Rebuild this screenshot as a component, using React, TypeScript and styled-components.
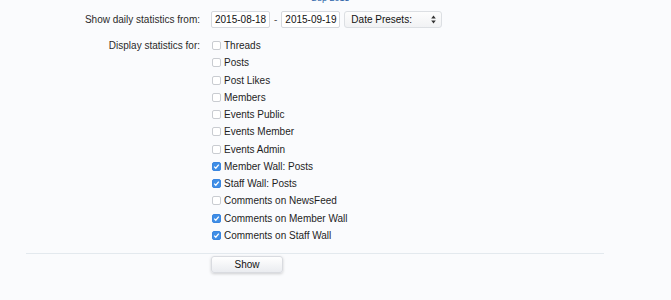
import React from 'react';
import styled, { createGlobalStyle } from 'styled-components';

const GlobalStyle = createGlobalStyle`
  html, body {
    margin: 0;
    padding: 0;
    background: #fafbfd;
  }
  body {
    font-family: 'Liberation Sans', Arial, sans-serif;
    font-size: 10px;
    color: #222;
  }
`;

const Page = styled.div`
  width: 671px;
  height: 300px;
  overflow: hidden;
  background: #fafbfd;
`;

const Caption = styled.div`
  margin-top: -6px;
  height: 9px;
  padding-left: 311px;
  font-size: 9px;
  line-height: 9px;
  color: #2b63a8;
`;

const Form = styled.form`
  margin: 0 0 0 26px;
  width: 578px;
`;

const Row = styled.div<{ $top: number }>`
  display: grid;
  grid-template-columns: 174px 1fr;
  column-gap: 11px;
  margin-top: ${({ $top }) => $top}px;
`;

const Label = styled.div<{ $height: number }>`
  text-align: right;
  line-height: ${({ $height }) => $height}px;
  white-space: nowrap;
  color: #2a2a2a;
`;

const Controls = styled.div`
  display: flex;
  align-items: center;
  gap: 4px;
`;

const DateInput = styled.input`
  box-sizing: border-box;
  width: 59px;
  height: 17px;
  padding: 0 0 0 3px;
  border: 1px solid #d6d9de;
  border-radius: 2px;
  background: #fff;
  font-family: 'Liberation Sans', Arial, sans-serif;
  font-size: 10px;
  color: #111;
  outline: none;
`;

const Dash = styled.span`
  color: #555;
`;

const Select = styled.div`
  box-sizing: border-box;
  position: relative;
  width: 98px;
  height: 17px;
  padding-left: 6px;
  border: 1px solid #dcdfe3;
  border-radius: 3px;
  background: linear-gradient(#fdfdfd, #f1f2f4);
  line-height: 15px;
  color: #111;
`;

const Arrows = styled.svg`
  position: absolute;
  right: 5px;
  top: 3px;
`;

const List = styled.div`
  display: flex;
  flex-direction: column;
`;

const Item = styled.label`
  display: flex;
  align-items: center;
  gap: 3px;
  height: 17.25px;
  color: #1e1e1e;
`;

const Box = styled.span<{ $checked: boolean }>`
  box-sizing: border-box;
  display: inline-flex;
  align-items: center;
  justify-content: center;
  width: 9px;
  height: 9px;
  margin-left: 1px;
  border-radius: 2px;
  border: 1px solid ${({ $checked }) => ($checked ? '#3a86e0' : '#c9ccd1')};
  background: ${({ $checked }) => ($checked ? '#3f8ee6' : '#fff')};
`;

const Divider = styled.hr`
  margin: 9px 0 0 0;
  border: 0;
  border-top: 1px solid #e3e9ee;
`;

const ButtonRow = styled.div`
  padding: 2px 0 0 185px;
`;

const Button = styled.button`
  width: 72px;
  height: 17px;
  border: 1px solid #d9dbe0;
  border-radius: 3px;
  background: linear-gradient(#ffffff, #eaecf0);
  box-shadow: 0 1px 3px rgba(0, 0, 0, 0.18);
  font-family: 'Liberation Sans', Arial, sans-serif;
  font-size: 10px;
  color: #111;
  padding: 0;
`;

const options: [string, boolean][] = [
  ['Threads', false],
  ['Posts', false],
  ['Post Likes', false],
  ['Members', false],
  ['Events Public', false],
  ['Events Member', false],
  ['Events Admin', false],
  ['Member Wall: Posts', true],
  ['Staff Wall: Posts', true],
  ['Comments on NewsFeed', false],
  ['Comments on Member Wall', true],
  ['Comments on Staff Wall', true],
];

export default function App() {
  return (
    <Page>
      <GlobalStyle />
      <Caption>Sep 2015</Caption>
      <Form onSubmit={(e) => e.preventDefault()}>
        <Row $top={8}>
          <Label $height={17}>Show daily statistics from:</Label>
          <Controls>
            <DateInput defaultValue="2015-08-18" />
            <Dash>-</Dash>
            <DateInput defaultValue="2015-09-19" />
            <Select>
              Date Presets:
              <Arrows width="5" height="9" viewBox="0 0 5 9">
                <path d="M2.5 0.5 L4.8 3.6 H0.2 Z M2.5 8.5 L4.8 5.4 H0.2 Z" fill="#333" />
              </Arrows>
            </Select>
          </Controls>
        </Row>
        <Row $top={9}>
          <Label $height={17.25}>Display statistics for:</Label>
          <List>
            {options.map(([name, checked]) => (
              <Item key={name}>
                <Box $checked={checked}>
                  {checked && (
                    <svg width="7" height="7" viewBox="0 0 7 7">
                      <path d="M1.2 3.6 L2.8 5.2 L5.8 1.6" stroke="#fff" strokeWidth="1.3" fill="none" />
                    </svg>
                  )}
                </Box>
                {name}
              </Item>
            ))}
          </List>
        </Row>
        <Divider />
        <ButtonRow>
          <Button type="submit">Show</Button>
        </ButtonRow>
      </Form>
    </Page>
  );
}
